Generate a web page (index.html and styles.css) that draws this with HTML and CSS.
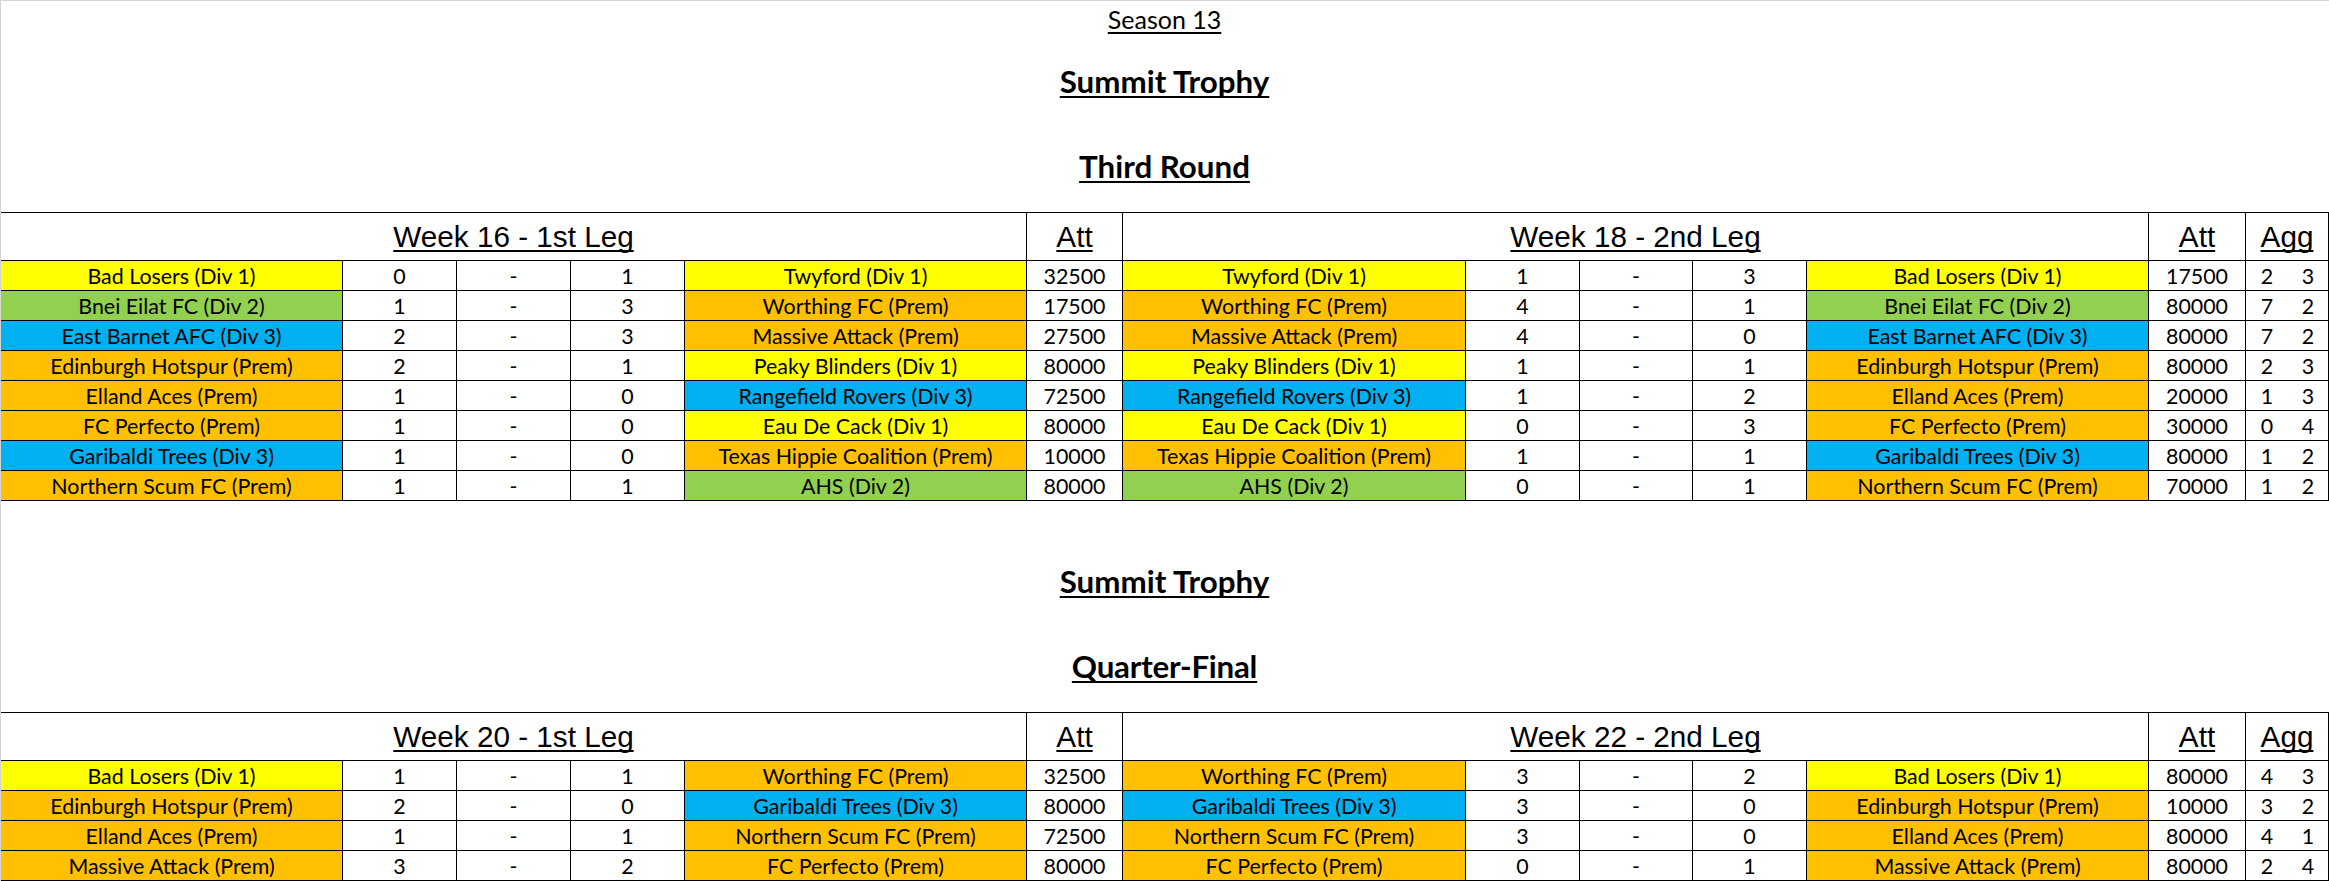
FILE: index.html
```html
<!DOCTYPE html>
<html lang="en">
<head>
<meta charset="utf-8">
<title>Season 13 - Summit Trophy</title>
<link rel="stylesheet" href="styles.css">
</head>
<body>
<div class="page">
  <div class="season"><span>Season 13</span></div>

  <section class="round">
    <div class="cup"><span>Summit Trophy</span></div>
    <div class="stage"><span>Third Round</span></div>
    <div class="fixtures">
      <div class="c hd leg"><span>Week 16 - 1st Leg</span></div>
      <div class="c hd"><span>Att</span></div>
      <div class="c hd leg"><span>Week 18 - 2nd Leg</span></div>
      <div class="c hd"><span>Att</span></div>
      <div class="c hd agg-h"><span>Agg</span></div>

      <div class="c t d1">Bad Losers (Div 1)</div><div class="c">0</div><div class="c">-</div><div class="c">1</div><div class="c t d1">Twyford (Div 1)</div><div class="c">32500</div>
      <div class="c t d1">Twyford (Div 1)</div><div class="c">1</div><div class="c">-</div><div class="c">3</div><div class="c t d1">Bad Losers (Div 1)</div><div class="c">17500</div><div class="c a1">2</div><div class="c">3</div>

      <div class="c t d2">Bnei Eilat FC (Div 2)</div><div class="c">1</div><div class="c">-</div><div class="c">3</div><div class="c t pr">Worthing FC (Prem)</div><div class="c">17500</div>
      <div class="c t pr">Worthing FC (Prem)</div><div class="c">4</div><div class="c">-</div><div class="c">1</div><div class="c t d2">Bnei Eilat FC (Div 2)</div><div class="c">80000</div><div class="c a1">7</div><div class="c">2</div>

      <div class="c t d3">East Barnet AFC (Div 3)</div><div class="c">2</div><div class="c">-</div><div class="c">3</div><div class="c t pr">Massive Attack (Prem)</div><div class="c">27500</div>
      <div class="c t pr">Massive Attack (Prem)</div><div class="c">4</div><div class="c">-</div><div class="c">0</div><div class="c t d3">East Barnet AFC (Div 3)</div><div class="c">80000</div><div class="c a1">7</div><div class="c">2</div>

      <div class="c t pr">Edinburgh Hotspur (Prem)</div><div class="c">2</div><div class="c">-</div><div class="c">1</div><div class="c t d1">Peaky Blinders (Div 1)</div><div class="c">80000</div>
      <div class="c t d1">Peaky Blinders (Div 1)</div><div class="c">1</div><div class="c">-</div><div class="c">1</div><div class="c t pr">Edinburgh Hotspur (Prem)</div><div class="c">80000</div><div class="c a1">2</div><div class="c">3</div>

      <div class="c t pr">Elland Aces (Prem)</div><div class="c">1</div><div class="c">-</div><div class="c">0</div><div class="c t d3">Rangefield Rovers (Div 3)</div><div class="c">72500</div>
      <div class="c t d3">Rangefield Rovers (Div 3)</div><div class="c">1</div><div class="c">-</div><div class="c">2</div><div class="c t pr">Elland Aces (Prem)</div><div class="c">20000</div><div class="c a1">1</div><div class="c">3</div>

      <div class="c t pr">FC Perfecto (Prem)</div><div class="c">1</div><div class="c">-</div><div class="c">0</div><div class="c t d1">Eau De Cack (Div 1)</div><div class="c">80000</div>
      <div class="c t d1">Eau De Cack (Div 1)</div><div class="c">0</div><div class="c">-</div><div class="c">3</div><div class="c t pr">FC Perfecto (Prem)</div><div class="c">30000</div><div class="c a1">0</div><div class="c">4</div>

      <div class="c t d3">Garibaldi Trees (Div 3)</div><div class="c">1</div><div class="c">-</div><div class="c">0</div><div class="c t pr">Texas Hippie Coalition (Prem)</div><div class="c">10000</div>
      <div class="c t pr">Texas Hippie Coalition (Prem)</div><div class="c">1</div><div class="c">-</div><div class="c">1</div><div class="c t d3">Garibaldi Trees (Div 3)</div><div class="c">80000</div><div class="c a1">1</div><div class="c">2</div>

      <div class="c t pr">Northern Scum FC (Prem)</div><div class="c">1</div><div class="c">-</div><div class="c">1</div><div class="c t d2">AHS (Div 2)</div><div class="c">80000</div>
      <div class="c t d2">AHS (Div 2)</div><div class="c">0</div><div class="c">-</div><div class="c">1</div><div class="c t pr">Northern Scum FC (Prem)</div><div class="c">70000</div><div class="c a1">1</div><div class="c">2</div>
    </div>
  </section>

  <div class="gap"></div>

  <section class="round">
    <div class="cup"><span>Summit Trophy</span></div>
    <div class="stage"><span class="qf">Quarter-Final</span></div>
    <div class="fixtures">
      <div class="c hd leg"><span>Week 20 - 1st Leg</span></div>
      <div class="c hd"><span>Att</span></div>
      <div class="c hd leg"><span>Week 22 - 2nd Leg</span></div>
      <div class="c hd"><span>Att</span></div>
      <div class="c hd agg-h"><span>Agg</span></div>

      <div class="c t d1">Bad Losers (Div 1)</div><div class="c">1</div><div class="c">-</div><div class="c">1</div><div class="c t pr">Worthing FC (Prem)</div><div class="c">32500</div>
      <div class="c t pr">Worthing FC (Prem)</div><div class="c">3</div><div class="c">-</div><div class="c">2</div><div class="c t d1">Bad Losers (Div 1)</div><div class="c">80000</div><div class="c a1">4</div><div class="c">3</div>

      <div class="c t pr">Edinburgh Hotspur (Prem)</div><div class="c">2</div><div class="c">-</div><div class="c">0</div><div class="c t d3">Garibaldi Trees (Div 3)</div><div class="c">80000</div>
      <div class="c t d3">Garibaldi Trees (Div 3)</div><div class="c">3</div><div class="c">-</div><div class="c">0</div><div class="c t pr">Edinburgh Hotspur (Prem)</div><div class="c">10000</div><div class="c a1">3</div><div class="c">2</div>

      <div class="c t pr">Elland Aces (Prem)</div><div class="c">1</div><div class="c">-</div><div class="c">1</div><div class="c t pr">Northern Scum FC (Prem)</div><div class="c">72500</div>
      <div class="c t pr">Northern Scum FC (Prem)</div><div class="c">3</div><div class="c">-</div><div class="c">0</div><div class="c t pr">Elland Aces (Prem)</div><div class="c">80000</div><div class="c a1">4</div><div class="c">1</div>

      <div class="c t pr">Massive Attack (Prem)</div><div class="c">3</div><div class="c">-</div><div class="c">2</div><div class="c t pr">FC Perfecto (Prem)</div><div class="c">80000</div>
      <div class="c t pr">FC Perfecto (Prem)</div><div class="c">0</div><div class="c">-</div><div class="c">1</div><div class="c t pr">Massive Attack (Prem)</div><div class="c">80000</div><div class="c a1">2</div><div class="c">4</div>
    </div>
  </section>
</div>
</body>
</html>
```

FILE: styles.css
```css
* { box-sizing: border-box; }

html, body {
  margin: 0;
  padding: 0;
  background: #ffffff;
}

body {
  font-family: "Lato", "Liberation Sans", sans-serif;
  color: #000000;
}

.page {
  width: 2329px;
  height: 881px;
  overflow: hidden;
  border-top: 1px solid #d4d4d4;
  border-left: 1px solid #d4d4d4;
}

.season,
.cup,
.stage {
  display: flex;
  align-items: center;
  justify-content: center;
  padding-right: 1px;
}

.season span,
.cup span,
.stage span {
  text-decoration: underline;
  text-decoration-skip-ink: none;
}

.season {
  height: 35px;
  font-size: 25px;
}
.season span {
  text-decoration-thickness: 1.5px;
  text-underline-offset: 3px;
}

.cup {
  height: 90px;
  font-size: 31.3px;
  font-weight: 700;
}

.stage {
  height: 80px;
  margin-bottom: 6px;
  font-size: 31.3px;
  font-weight: 700;
}

.stage .qf {
  letter-spacing: -0.25px;
}

.cup span,
.stage span {
  text-decoration-thickness: 2px;
  text-underline-offset: 3px;
}

.gap {
  height: 35px;
}

.fixtures {
  display: grid;
  grid-template-columns: 342px 114px 114px 114px 342px 96px 343px 114px 113px 114px 342px 97px 42px 41px;
  grid-template-rows: 48px;
  grid-auto-rows: 30px;
  border-top: 1px solid #000000;
}

.c {
  display: flex;
  align-items: center;
  justify-content: center;
  border-right: 1px solid #000000;
  border-bottom: 1px solid #000000;
  font-size: 21.4px;
  white-space: nowrap;
  background: #ffffff;
}

.hd {
  font-family: "Liberation Sans", Arial, sans-serif;
  font-size: 29.7px;
}
.hd span {
  text-decoration: underline;
  text-decoration-thickness: 2px;
  text-underline-offset: 3px;
  text-decoration-skip-ink: none;
}

.leg {
  grid-column: span 5;
}

.agg-h {
  grid-column: span 2;
}

.a1 {
  border-right: none;
}

.d1 { background: #ffff00; }
.d2 { background: #92d050; }
.d3 { background: #00b0f0; }
.pr { background: #ffc000; }
```
